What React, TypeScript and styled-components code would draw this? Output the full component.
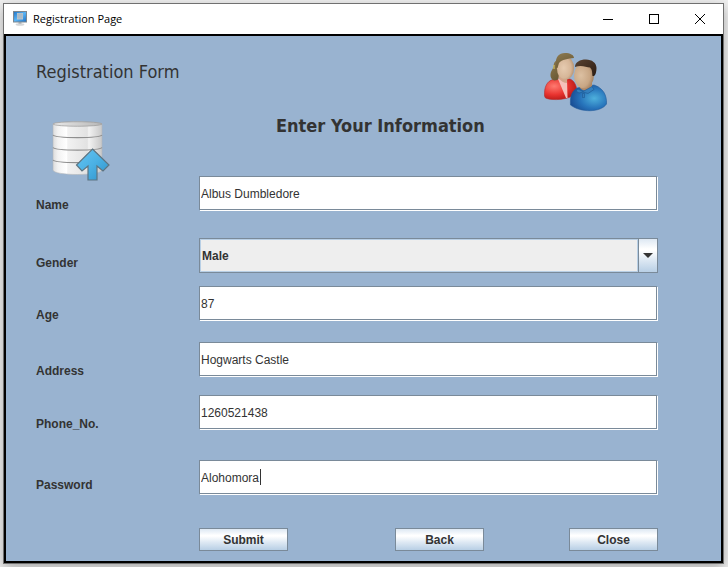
import React from 'react';
import styled, { createGlobalStyle } from 'styled-components';

const GlobalStyle = createGlobalStyle`
  *, *::before, *::after { box-sizing: border-box; }
  body { margin: 0; background: #f0f0f0; }
`;

const Desktop = styled.div`
  display: flex;
  min-height: 100vh;
  padding: 3px 4px 4px 3px;
`;

const Window = styled.div`
  display: flex;
  flex-direction: column;
  flex: 1;
  min-width: 0;
  border: 1px solid #707070;
  background: #fff;
  box-shadow: 0 4px 12px rgba(0, 0, 0, 0.3);
`;

const TitleBar = styled.header`
  display: flex;
  align-items: center;
  height: 30px;
  padding-left: 8px;
  gap: 5px;
`;

const WindowTitle = styled.span`
  flex: 1;
  font: 11px/16px 'Open Sans', 'Segoe UI', sans-serif;
  color: #000;
`;

const WindowControls = styled.div`
  display: flex;
`;

const ControlButton = styled.button`
  display: flex;
  align-items: center;
  justify-content: center;
  width: 46px;
  height: 30px;
  padding: 0;
  border: 0;
  background: transparent;
`;

const Panel = styled.main`
  flex: 1;
  padding: 14px 63px 10px 30px;
  border: 2px solid #000;
  background: #99b3d0;
  color: #333;
  font-family: 'Liberation Sans', Arial, sans-serif;
`;

const Masthead = styled.div`
  display: flex;
  justify-content: space-between;
  height: 64px;
  padding-right: 50px;
`;

const FormTitle = styled.h1`
  margin: 10px 0 0;
  font: 18px/24px 'DejaVu Sans Condensed', Tahoma, sans-serif;
`;

const Intro = styled.div`
  display: grid;
  grid-template-columns: 240px 1fr;
  height: 62px;
`;

const DatabaseSlot = styled.div`
  padding: 4px 0 0 12px;
`;

const SectionTitle = styled.h2`
  margin: 0;
  font: bold 18px/24px 'DejaVu Sans Condensed', Tahoma, sans-serif;
`;

const Form = styled.form`
  display: flex;
  flex-direction: column;
`;

const Row = styled.div<{ $gap?: number }>`
  display: grid;
  grid-template-columns: 163px 1fr;
  align-items: start;
  height: 35px;
  margin-top: ${({ $gap = 0 }) => $gap}px;
`;

const Label = styled.label<{ $raised?: boolean }>`
  padding-top: ${({ $raised }) => ($raised ? 18 : 22)}px;
  font-size: 12px;
  font-weight: bold;
  line-height: 14px;
`;

const Field = styled.div`
  position: relative;
  display: flex;
  padding: 0 1px 1px 0;
`;

const TextInput = styled.input`
  flex: 1;
  min-width: 0;
  height: 34px;
  padding: 2px 1px 0;
  border: 1px solid #7a8a99;
  border-radius: 0;
  outline: 0;
  background: #fff;
  box-shadow: 1px 1px 0 #fff;
  color: #333;
  font: 12px 'Liberation Sans', Arial, sans-serif;
`;

const Caret = styled.span`
  position: absolute;
  top: 9px;
  left: 61px;
  width: 1px;
  height: 16px;
  background: #333;
`;

const Combo = styled.div`
  display: grid;
  grid-template-columns: 1fr 19px;
  height: 35px;
  border: 1px solid #7a8a99;
`;

const Select = styled.select`
  grid-area: 1 / 1 / 2 / 3;
  margin-right: 19px;
  padding: 0 1px;
  border: 1px solid #b8cfe5;
  border-radius: 0;
  outline: 0;
  appearance: none;
  background: #eee;
  color: #333;
  font: bold 12px 'Liberation Sans', Arial, sans-serif;
`;

const ComboArrow = styled.span`
  grid-area: 1 / 2;
  display: flex;
  align-items: center;
  justify-content: center;
  border-left: 1px solid #7a8a99;
  background: linear-gradient(#dde8f3 0%, #fff 30%, #fff 34%, #dde8f3 64%, #b8cfe5 100%);
  pointer-events: none;
`;

const Actions = styled.div`
  display: grid;
  grid-template-columns: 196fr 174fr 89px;
  margin: 33px 0 0 163px;
`;

const ActionButton = styled.button`
  width: 89px;
  height: 23px;
  padding: 0;
  border: 1px solid #7a8a99;
  border-radius: 0;
  background: linear-gradient(#dde8f3 0%, #fff 30%, #fff 34%, #dde8f3 64%, #b8cfe5 100%);
  color: #333;
  font: bold 12px 'Liberation Sans', Arial, sans-serif;
`;

function MonitorIcon() {
  return (
    <svg width="16" height="16" viewBox="0 0 16 16" aria-hidden="true">
      <defs>
        <linearGradient id="screen" x1="0" y1="0" x2="1" y2="1">
          <stop offset="0" stopColor="#2478c8" />
          <stop offset="0.5" stopColor="#5ab4f4" />
          <stop offset="1" stopColor="#1f74c8" />
        </linearGradient>
      </defs>
      <ellipse cx="8" cy="13.5" rx="4.4" ry="1.3" fill="#d4d6d8" />
      <path d="M6.5 11h3v2h-3z" fill="#b9bdc1" />
      <rect x="1" y="0" width="14" height="11.5" fill="#7d8790" />
      <rect x="2" y="1" width="12" height="9.5" fill="url(#screen)" />
      <rect x="5" y="2" width="6" height="6.5" fill="#b7c4ce" />
      <path d="M5 4h6M5 6h6M7 2v6M9 2v6" stroke="#9cacb8" strokeWidth="0.5" />
    </svg>
  );
}

function PeopleIcon() {
  return (
    <svg width="64" height="64" viewBox="0 0 64 64" aria-hidden="true">
      <defs>
        <radialGradient id="red" cx="0.3" cy="0.35" r="0.75">
          <stop offset="0" stopColor="#ff7a70" />
          <stop offset="0.55" stopColor="#e93430" />
          <stop offset="1" stopColor="#b01614" />
        </radialGradient>
        <radialGradient id="blue" cx="0.66" cy="0.52" r="0.7">
          <stop offset="0" stopColor="#4eb0dc" />
          <stop offset="0.55" stopColor="#2774bb" />
          <stop offset="1" stopColor="#184a91" />
        </radialGradient>
        <radialGradient id="skinA" cx="0.4" cy="0.5" r="0.7">
          <stop offset="0" stopColor="#e6cbb0" />
          <stop offset="0.6" stopColor="#d6b698" />
          <stop offset="1" stopColor="#a9835f" />
        </radialGradient>
        <radialGradient id="skinB" cx="0.35" cy="0.5" r="0.75">
          <stop offset="0" stopColor="#dcc0a2" />
          <stop offset="0.6" stopColor="#c8a684" />
          <stop offset="1" stopColor="#8f6d4c" />
        </radialGradient>
        <linearGradient id="hairA" x1="0" y1="0" x2="0.5" y2="1">
          <stop offset="0" stopColor="#8d7a50" />
          <stop offset="1" stopColor="#6b5a36" />
        </linearGradient>
        <linearGradient id="hairB" x1="0" y1="0" x2="1" y2="1">
          <stop offset="0" stopColor="#5a4230" />
          <stop offset="1" stopColor="#2b1d14" />
        </linearGradient>
      </defs>
      <path d="M0.5 46C0 37 3 31 9 29.5L26 29C31 31 33 37 33 43C26 50 8 51 1.5 48Z" fill="url(#red)" stroke="#b72a28" strokeWidth="0.6" />
      <path d="M14 29L22 48H23.5L23 29Z" fill="#f6c0ba" />
      <path d="M14 24h9v9c-3 0-6-2-9-5z" fill="#d4a48a" />
      <path d="M13 10C8 13 11 16 8 20C5.5 24 6 29 10 30.5C15 31 15 27 14.5 23L17 12Z" fill="url(#hairA)" />
      <ellipse cx="21.5" cy="18" rx="8.6" ry="11.8" fill="url(#skinA)" />
      <path d="M12 15C11 7 15 3 21 3C26 3 30 5 30 8C24 8.5 18 9.5 15 13L13.5 18C11 18 12 17 12 15Z" fill="url(#hairA)" />
      <path d="M10 15v4" stroke="#e2cf62" strokeWidth="1" />
      <path d="M26.5 55C26 48 27 42 33 38L50 35C59 38 63 45 62.5 54C57 62.5 37 63 26.5 55Z" fill="url(#blue)" stroke="#205b9b" strokeWidth="0.6" />
      <path d="M35 31h13v6c-2 4-8 5-12 1z" fill="#b28967" />
      <path d="M34 39l5 2.5 9-5 2 3-6 4-5-1.5-4 1-3-2z" fill="#337fbe" stroke="#1d5791" strokeWidth="0.6" />
      <path d="M38.5 43.5h2v4h-2z" fill="#347dba" stroke="#1b518a" strokeWidth="0.5" />
      <ellipse cx="40" cy="25.5" rx="10" ry="13" fill="url(#skinB)" />
      <path d="M31 17C31 12 36 9.5 42 9.5C48 9.5 52.5 13 52.5 18C52.5 22 51.5 25 50 26L48.5 26C48 22 48.5 20 46 17.5C42 17 37 14.5 31 17Z" fill="url(#hairB)" />
    </svg>
  );
}

function DatabaseIcon() {
  return (
    <svg width="64" height="64" viewBox="0 0 64 64" aria-hidden="true">
      <defs>
        <linearGradient id="drum" x1="0" y1="0" x2="1" y2="0">
          <stop offset="0" stopColor="#dcdcdc" />
          <stop offset="0.1" stopColor="#f2f2f2" />
          <stop offset="0.28" stopColor="#fff" />
          <stop offset="0.3" stopColor="#f2f2f2" />
          <stop offset="0.7" stopColor="#e2e2e2" />
          <stop offset="0.73" stopColor="#f2f2f2" />
          <stop offset="1" stopColor="#c8c8c8" />
        </linearGradient>
        <linearGradient id="lid" x1="0" y1="0" x2="1" y2="0">
          <stop offset="0" stopColor="#e8e8e8" />
          <stop offset="1" stopColor="#b8b8b8" />
        </linearGradient>
        <linearGradient id="arrow" x1="0" y1="0" x2="1" y2="1">
          <stop offset="0" stopColor="#65c4f3" />
          <stop offset="0.5" stopColor="#4bb1e4" />
          <stop offset="1" stopColor="#2c91ca" />
        </linearGradient>
      </defs>
      <path d="M5 6C5 3 54 3 54 6V52C54 58 5 58 5 52Z" fill="url(#drum)" stroke="#b4b7ba" strokeWidth="0.6" />
      <path d="M5 6C7 3 52 3 54 6C52 9 7 9 5 6Z" fill="url(#lid)" stroke="#999" strokeWidth="0.7" />
      <path d="M5 17C8 20.5 51 20.5 54 17M5 29.5C8 33 51 33 54 29.5M5 42C8 45.5 51 45.5 54 42" fill="none" stroke="#8f8f8f" strokeWidth="1.1" />
      <path d="M44.5 31L61 47L55 53L49 48V62H40V48L34 53L28.5 47Z" fill="url(#arrow)" stroke="#5d7481" strokeWidth="1.2" />
    </svg>
  );
}

type TextRowProps = {
  id: string;
  label: string;
  value: string;
  gap?: number;
  raised?: boolean;
  caret?: boolean;
};

function TextRow({ id, label, value, gap, raised, caret }: TextRowProps) {
  return (
    <Row $gap={gap}>
      <Label htmlFor={id} $raised={raised}>{label}</Label>
      <Field>
        <TextInput id={id} type="text" defaultValue={value} />
        {caret && <Caret />}
      </Field>
    </Row>
  );
}

export default function App() {
  return (
    <>
      <GlobalStyle />
      <Desktop>
        <Window>
          <TitleBar>
            <MonitorIcon />
            <WindowTitle>Registration Page</WindowTitle>
            <WindowControls>
              <ControlButton type="button" aria-label="Minimize">
                <svg width="10" height="11"><path d="M0 5.5h10" stroke="#000" /></svg>
              </ControlButton>
              <ControlButton type="button" aria-label="Maximize">
                <svg width="10" height="10"><rect x="0.5" y="0.5" width="9" height="9" fill="none" stroke="#000" /></svg>
              </ControlButton>
              <ControlButton type="button" aria-label="Close window">
                <svg width="10" height="10"><path d="M0 0l10 10M10 0L0 10" stroke="#000" /></svg>
              </ControlButton>
            </WindowControls>
          </TitleBar>
          <Panel>
            <Masthead>
              <FormTitle>Registration Form</FormTitle>
              <PeopleIcon />
            </Masthead>
            <Intro>
              <DatabaseSlot><DatabaseIcon /></DatabaseSlot>
              <SectionTitle>Enter Your Information</SectionTitle>
            </Intro>
            <Form onSubmit={(e) => e.preventDefault()}>
              <TextRow id="name" label="Name" value="Albus Dumbledore" />
              <Row $gap={27}>
                <Label htmlFor="gender" $raised>Gender</Label>
                <Combo>
                  <Select id="gender" defaultValue="Male">
                    <option>Male</option>
                    <option>Female</option>
                  </Select>
                  <ComboArrow>
                    <svg width="10" height="5"><path d="M0 0h10L5 5z" fill="#333" /></svg>
                  </ComboArrow>
                </Combo>
              </Row>
              <TextRow id="age" label="Age" value="87" gap={13} />
              <TextRow id="address" label="Address" value="Hogwarts Castle" gap={21} />
              <TextRow id="phone" label="Phone_No." value="1260521438" gap={18} />
              <TextRow id="password" label="Password" value="Alohomora" gap={30} raised caret />
              <Actions>
                <ActionButton type="submit">Submit</ActionButton>
                <ActionButton type="button">Back</ActionButton>
                <ActionButton type="button">Close</ActionButton>
              </Actions>
            </Form>
          </Panel>
        </Window>
      </Desktop>
    </>
  );
}
